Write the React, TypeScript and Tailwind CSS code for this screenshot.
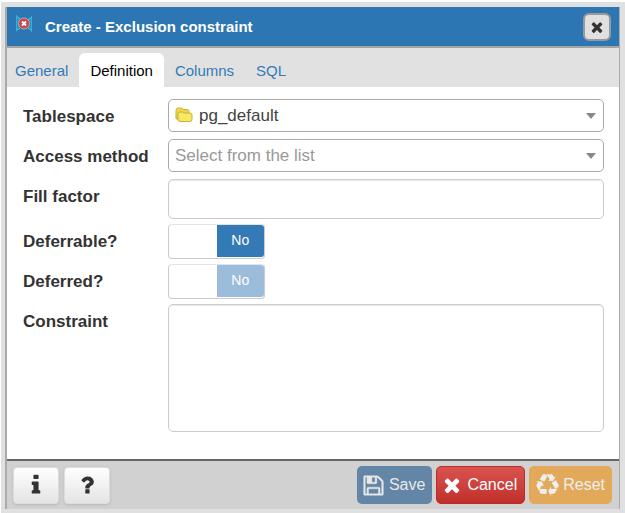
import { useState, type ReactNode } from "react";

const paths = {
  close:
    "M1490 1322q0 40-28 68l-136 136q-28 28-68 28t-68-28l-294-294-294 294q-28 28-68 28t-68-28l-136-136q-28-28-28-68t28-68l294-294-294-294q-28-28-28-68t28-68l136-136q28-28 68-28t68 28l294 294 294-294q28-28 68-28t68 28l136 136q28 28 28 68t-28 68l-294 294 294 294q28 28 28 68z",
  save:
    "M512 1536h768v-384h-768v384zm896 0h128v-896q0-14-10-38.5t-20-34.5l-281-281q-10-10-34-20t-39-10v416q0 40-28 68t-68 28h-576q-40 0-68-28t-28-68v-416h-128v1280h128v-416q0-40 28-68t68-28h832q40 0 68 28t28 68v416zm-384-928v-320q0-13-9.5-22.5t-22.5-9.5h-192q-13 0-22.5 9.5t-9.5 22.5v320q0 13 9.5 22.5t22.5 9.5h192q13 0 22.5-9.5t9.5-22.5zm640 32v928q0 40-28 68t-68 28h-1344q-40 0-68-28t-28-68v-1344q0-40 28-68t68-28h928q40 0 88 20t76 48l280 280q28 28 48 76t20 88z",
  info:
    "M1216 1344v128q0 26-19 45t-45 19h-512q-26 0-45-19t-19-45v-128q0-26 19-45t45-19h64v-384h-64q-26 0-45-19t-19-45v-128q0-26 19-45t45-19h384q26 0 45 19t19 45v576h64q26 0 45 19t19 45zm-128-1152v192q0 26-19 45t-45 19h-256q-26 0-45-19t-19-45v-192q0-26 19-45t45-19h256q26 0 45 19t19 45z",
  question:
    "M1088 1256v240q0 16-12 28t-28 12h-240q-16 0-28-12t-12-28v-240q0-16 12-28t28-12h240q16 0 28 12t12 28zm316-600q0 54-15.5 101t-35 76.5-55 59.5-57.5 43.5-61 35.5q-41 23-68.5 65t-27.5 67q0 17-12 32.5t-28 15.5h-240q-15 0-25.5-18.5t-10.5-37.5v-45q0-83 65-156.5t143-108.5q59-27 84-56t25-76q0-42-46.5-74t-107.5-32q-65 0-108 29-35 25-107 115-13 16-31 16-12 0-25-8l-164-125q-13-10-15.5-25t5.5-28q160-266 464-266 80 0 161 31t146 83 106 127.5 41 158.5z",
  recycle:
    "M836 1169l-15 368-2 22-420-29q-36-3-67-31.5t-47-65.5q-11-27-14.5-55t4-65 12-55 21.5-64 19-53q78 12 509 28zm-387-586l180 379-147-92q-63 72-111.5 144.5t-72.5 125-39.5 94.5-18.5 63l-4 21-190-357q-17-26-18-56t6-47l8-18q35-63 114-188l-140-86zm1231 517l-188 359q-12 29-36.5 46.5t-43.5 20.5l-18 4q-71 7-219 12l8 164-230-367 211-362 7 173q170 16 283 5t170-33zm-785-924q-47 63-265 435l-317-187-19-12 225-356q20-31 60-45t80-10q24 2 48.5 12t42 21 41.5 33 36 34.5 36 39.5 32 35zm655 307l212 363q18 37 12.5 76t-27.5 74q-13 20-33 37t-38 28-48.5 22-47 16-51.5 14-46 12q-34-72-265-436l313-195zm-143-226l142-83-220 373-419-20 151-86q-34-89-75-166t-75.5-123.5-64.5-80-47-46.5l-17-13 405 1q31-3 58 10.5t39 28.5l11 15q39 61 112 190z",
};

function Icon({ name, className }: { name: keyof typeof paths; className: string }) {
  return (
    <svg viewBox="0 0 1792 1792" fill="currentColor" className={`overflow-visible ${className}`} aria-hidden="true">
      <path d={paths[name]} />
    </svg>
  );
}

function ConstraintIcon() {
  return (
    <svg viewBox="0 0 18 18" className="size-[18px] shrink-0" aria-hidden="true">
      <path d="M1 0l5 3v10l-5 4z" fill="#2a93c0" />
      <path d="M17 1l-5 3v9l5 4z" fill="#2a93c0" />
      <path d="M1.500 0v16M16.500 1v16" stroke="#2fb4d6" strokeWidth="1" />
      <path d="M2 2l3 2M2 15l3-2M16 3l-3 2M16 15l-3-2" stroke="#55c3dc" strokeWidth="1" />
      <circle cx="9" cy="8.500" r="5.500" fill="#cf4448" stroke="#b9a3b4" strokeWidth="1" />
      <path d="M7 6.500l4 4M11 6.500l-4 4" stroke="#fff" strokeWidth="1.800" />
    </svg>
  );
}

function FolderIcon() {
  return (
    <svg viewBox="0 0 18 16" className="h-4 w-[18px]" aria-hidden="true">
      <path
        d="M1 11V3.500Q1 1 3 1h3q1.500 0 2 1.500h4q2 0 2 2v6q0 2-2 2H3q-2 0-2-2z"
        fill="#ecd64e"
        stroke="#cdb030"
      />
      <path
        d="M3 12.500V7Q3 5 5 5h2.500l1.500 1h6q2 0 2 2V12.500q0 2-2 2H5q-2 0-2-2z"
        fill="#f6e864"
        stroke="#cdb030"
      />
    </svg>
  );
}

function Row({ id, label, children }: { id: string; label: string; children: ReactNode }) {
  return (
    <div className="flex items-start">
      <label htmlFor={id} className="w-[145px] shrink-0 text-[17px] leading-[35px] font-bold text-[#333]">
        {label}
      </label>
      {children}
    </div>
  );
}

function Select({
  id,
  options,
  icon,
  placeholder,
}: {
  id: string;
  options: string[];
  icon?: ReactNode;
  placeholder?: string;
}) {
  const [value, setValue] = useState(placeholder ? "" : options[0]);
  return (
    <div className="relative h-[35px] min-w-0 flex-1">
      <select
        id={id}
        value={value}
        onChange={(e) => setValue(e.target.value)}
        className={`h-[33px] w-full appearance-none rounded-[5px] border border-[#aaa] bg-white pr-8 text-[17px] ${
          icon ? "pl-[30px]" : "pl-1.5"
        } ${value ? "text-[#444]" : "text-[#999]"}`}
      >
        {placeholder && <option value="">{placeholder}</option>}
        {options.map((o) => (
          <option key={o}>{o}</option>
        ))}
      </select>
      {icon && <span className="pointer-events-none absolute top-2 left-[7px]">{icon}</span>}
      <svg viewBox="0 0 10 6" className="pointer-events-none absolute top-3.5 right-2 h-1.5 w-2.5" aria-hidden="true">
        <path d="M0 0h10L5 6z" fill="#888" />
      </svg>
    </div>
  );
}

function Toggle({ id, disabled }: { id: string; disabled?: boolean }) {
  const [on, setOn] = useState(false);
  return (
    <span className="relative flex h-[35px] w-[97px] rounded border border-[#ccc] border-t-[#e4e4e4] bg-white pb-px">
      <input
        id={id}
        type="checkbox"
        checked={on}
        disabled={disabled}
        onChange={(e) => setOn(e.target.checked)}
        className="absolute inset-0 size-full cursor-pointer appearance-none"
      />
      <span
        className={`pointer-events-none flex w-1/2 justify-center text-sm leading-[30px] text-white ${
          on ? "rounded-l-[3px]" : "ml-auto rounded-r-[3px]"
        } ${disabled ? "bg-[#9bbcdb]" : "bg-[#337ab7]"}`}
      >
        {on ? "Yes" : "No"}
      </span>
    </span>
  );
}

const tabs = ["General", "Definition", "Columns", "SQL"];

export default function App() {
  const [active, setActive] = useState("Definition");
  return (
    <div className="bg-white pt-0.5 pl-px font-['Liberation_Sans',Arial,sans-serif]">
      <div className="flex min-h-[511px] flex-col border-4 border-t-[5px] border-r-[5px] border-[#e0e0e0]">
        <section
          role="dialog"
          aria-labelledby="dialog-title"
          className="flex flex-1 flex-col border-r border-l-2 border-[#aaa] bg-white"
        >
          <header className="flex h-[41px] items-center border-b-2 border-[#a5a5a5] bg-[#2c76b4] px-2">
            <div className="pb-1.5">
              <ConstraintIcon />
            </div>
            <h1 id="dialog-title" className="ml-3 flex-1 pt-0.5 text-[15px] font-bold text-white">
              Create - Exclusion constraint
            </h1>
            <button
              type="button"
              aria-label="Close"
              className="flex size-7 items-center justify-center rounded-md border-2 border-[#999] bg-[#e0e0e0] text-[#333]"
            >
              <Icon name="close" className="size-4" />
            </button>
          </header>

          <div role="tablist" className="flex h-[39px] items-end bg-[#e1e1e1]">
            {tabs.map((t) => (
              <button
                key={t}
                type="button"
                role="tab"
                aria-selected={t === active}
                onClick={() => setActive(t)}
                className={`h-[34px] rounded-t-md px-[11px] pt-0.5 text-[15px] first:pl-2 ${
                  t === active ? "bg-white text-black" : "text-[#337ab7]"
                }`}
              >
                {t}
              </button>
            ))}
          </div>

          <form className="flex flex-1 flex-col gap-[5px] pt-3 pr-[15px] pb-[25px] pl-4">
            <Row id="tablespace" label="Tablespace">
              <Select id="tablespace" options={["pg_default"]} icon={<FolderIcon />} />
            </Row>
            <Row id="access" label="Access method">
              <Select id="access" options={["gist", "spgist", "btree", "hash"]} placeholder="Select from the list" />
            </Row>
            <Row id="fill" label="Fill factor">
              <input
                id="fill"
                type="text"
                className="h-10 min-w-0 flex-1 rounded-[5px] border border-[#ccc] px-3 text-[17px] shadow-[inset_0_1px_1px_rgba(0,0,0,0.08)]"
              />
            </Row>
            <Row id="deferrable" label="Deferrable?">
              <Toggle id="deferrable" />
            </Row>
            <Row id="deferred" label="Deferred?">
              <Toggle id="deferred" disabled />
            </Row>
            <Row id="constraint" label="Constraint">
              <textarea
                id="constraint"
                className="h-32 min-w-0 flex-1 resize-none rounded-[5px] border border-[#ccc] px-3 py-1.5 text-[17px] shadow-[inset_0_1px_1px_rgba(0,0,0,0.08)]"
              />
            </Row>
          </form>

          <footer className="flex items-center gap-1 border-t-2 border-[#666] bg-[#d1d1d1] py-[5px] pr-[7px] pl-1.5">
            <button
              type="button"
              aria-label="Information"
              className="flex h-[37px] w-[46px] items-center justify-center rounded border border-[#ddd] bg-linear-to-b from-white to-[#e4e4e4] text-[#333] shadow-sm"
            >
              <Icon name="info" className="size-6" />
            </button>
            <button
              type="button"
              aria-label="Help"
              className="ml-px flex h-[37px] w-[46px] items-center justify-center rounded border border-[#ddd] bg-linear-to-b from-white to-[#e4e4e4] text-[#333] shadow-sm"
            >
              <Icon name="question" className="size-6" />
            </button>
            <button
              type="button"
              disabled
              className="ml-auto flex h-[38px] items-center gap-1 rounded-[5px] bg-[#6386a6] px-[5px] pr-[7px] text-base text-[#e8e8e8]"
            >
              <Icon name="save" className="size-[23px] stroke-current stroke-[30]" />
              Save
            </button>
            <button
              type="button"
              className="flex h-[38px] items-center gap-1 rounded-[5px] border border-[#b92c28] bg-linear-to-b from-[#d9534f] to-[#c12e2a] px-1 pr-[7px] text-base text-white"
            >
              <Icon name="close" className="size-[22px]" />
              Cancel
            </button>
            <button
              type="button"
              disabled
              className="flex h-[38px] items-center gap-1 rounded-[5px] bg-[#e2a95a] px-[7px] text-base text-[#eee]"
            >
              <Icon name="recycle" className="size-[23px]" />
              Reset
            </button>
          </footer>
        </section>
      </div>
    </div>
  );
}
